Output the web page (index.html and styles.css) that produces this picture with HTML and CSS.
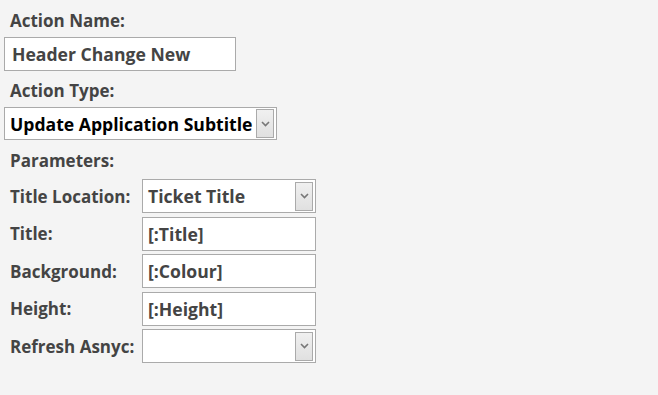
FILE: index.html
```html
<!DOCTYPE html>
<html lang="en">
<head>
    <meta charset="UTF-8">
    <title>Action Editor</title>
    <link rel="stylesheet" href="styles.css">
</head>
<body>
    <div class="container">
        <div class="field-label">Action Name:</div>
        <div class="text-box name-box">Header Change New</div>

        <div class="field-label">Action Type:</div>
        <div class="select-box type-box">
            <span class="select-text">Update Application Subtitle</span>
            <span class="select-btn">
                <svg width="9" height="6" viewBox="0 0 9 6"><path d="M1 1 L4.5 4.5 L8 1" fill="none" stroke="#777" stroke-width="1.6"/></svg>
            </span>
        </div>

        <div class="field-label">Parameters:</div>

        <!-- Parameter rows -->
        <div class="params">
            <div class="param-label">Title Location:</div>
            <div class="select-box param-box">
                <span class="select-text">Ticket Title</span>
                <span class="select-btn">
                    <svg width="9" height="6" viewBox="0 0 9 6"><path d="M1 1 L4.5 4.5 L8 1" fill="none" stroke="#777" stroke-width="1.6"/></svg>
                </span>
            </div>

            <div class="param-label">Title:</div>
            <div class="text-box param-box">[:Title]</div>

            <div class="param-label">Background:</div>
            <div class="text-box param-box">[:Colour]</div>

            <div class="param-label">Height:</div>
            <div class="text-box param-box">[:Height]</div>

            <div class="param-label">Refresh Asnyc:</div>
            <div class="select-box param-box">
                <span class="select-text"></span>
                <span class="select-btn">
                    <svg width="9" height="6" viewBox="0 0 9 6"><path d="M1 1 L4.5 4.5 L8 1" fill="none" stroke="#777" stroke-width="1.6"/></svg>
                </span>
            </div>
        </div>
    </div>
</body>
</html>
```

FILE: styles.css
```css
body {
    margin: 0;
    background-color: #f4f4f4;
    font-family: "Open Sans", Arial, sans-serif;
    font-weight: 700;
    font-size: 17px;
    color: #444;
}
.container {
    padding: 5px 4px;
}
.field-label {
    padding-left: 6px;
    height: 32px;
    line-height: 32px;
}
.text-box {
    box-sizing: border-box;
    height: 34px;
    line-height: 32px;
    border: 1px solid #aaa;
    background-color: #fff;
    padding-left: 7px;
    font-size: 17.6px;
}
.name-box {
    width: 232px;
    margin-bottom: 4px;
}
.select-box {
    box-sizing: border-box;
    display: flex;
    align-items: center;
    height: 33px;
    border: 1px solid #aaa;
    background-color: #fff;
    padding: 2px;
    font-size: 17.6px;
}
.select-text {
    flex: 1;
    padding-left: 3px;
}
.type-box {
    width: 273px;
    color: #000;
    margin-bottom: 5px;
}
.select-btn {
    display: flex;
    align-items: center;
    justify-content: center;
    width: 16px;
    height: 27px;
    border: 1px solid #aaa;
    background: linear-gradient(#f0f0f0, #e0e0e0);
}
.params {
    display: grid;
    grid-template-columns: 138px 174px;
    row-gap: 3.5px;
    margin-top: 2px;
}
.param-label {
    padding-left: 6px;
    align-self: center;
}
.param-box {
    width: 174px;
    height: 34px;
    padding-left: 5px;
}
.param-box .select-text {
    padding-left: 3px;
}
.select-box.param-box {
    padding-left: 2px;
}
```
